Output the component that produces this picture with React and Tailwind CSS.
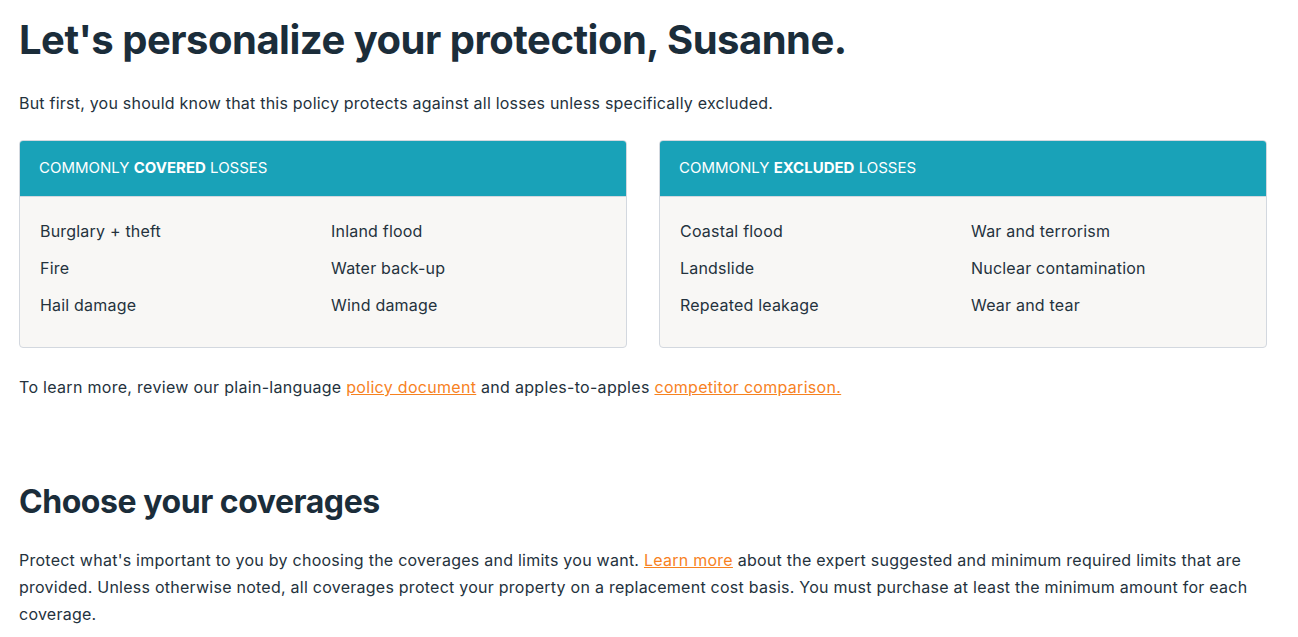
import React from "react";

const covered = [
  ["Burglary + theft", "Inland flood"],
  ["Fire", "Water back-up"],
  ["Hail damage", "Wind damage"],
];
const excluded = [
  ["Coastal flood", "War and terrorism"],
  ["Landslide", "Nuclear contamination"],
  ["Repeated leakage", "Wear and tear"],
];

function Card({ word, rows }) {
  return (
    <div className="rounded-[4px] border border-[#d3d8df] overflow-hidden bg-[#f8f7f5]">
      <div className="h-[56px] bg-[#19a2b8] flex items-center px-[19px] text-white text-[15px] tracking-[0px] border-b border-[#d3d8df]">
        <span>
          COMMONLY <span className="font-bold">{word}</span> LOSSES
        </span>
      </div>
      <div className="px-[20px] pt-[22px] pb-[30px] grid grid-cols-2 gap-x-[16px] gap-y-[13px] text-[16px] leading-[24px] tracking-[0.2px] text-[#24323d]">
        {rows.flat().map((t) => (
          <div key={t}>{t}</div>
        ))}
      </div>
    </div>
  );
}

export default function App() {
  return (
    <div
      className="bg-white min-h-[637px] text-[#24323d]"
      style={{ fontFamily: "Inter, 'Open Sans', Arial, sans-serif" }}
    >
      <div className="w-[1248px] ml-[19px]">
        <h1 className="text-[40px] leading-[48px] font-bold text-[#1b2d3a] pt-[16px] tracking-[-0.5px]">
          Let's personalize your protection, Susanne.
        </h1>
        <p className="mt-[27px] text-[16px] leading-[24px] tracking-[0.22px]">
          But first, you should know that this policy protects against all losses unless specifically excluded.
        </p>
        <div className="mt-[25px] grid grid-cols-2 gap-[32px]">
          <Card word="COVERED" rows={covered} />
          <Card word="EXCLUDED" rows={excluded} />
        </div>
        <p className="mt-[27px] text-[16px] leading-[24px] tracking-[0.3px]">
          To learn more, review our plain-language{" "}
          <a href="#" className="text-[#f7821f] underline">policy document</a> and apples-to-apples{" "}
          <a href="#" className="text-[#f7821f] underline">competitor comparison.</a>
        </p>
        <h2 className="mt-[83px] text-[32px] leading-[40px] font-bold text-[#1b2d3a] tracking-[-0.45px]">
          Choose your coverages
        </h2>
        <p className="mt-[25px] text-[16px] leading-[27px] tracking-[0.25px]">
          Protect what's important to you by choosing the coverages and limits you want.{" "}
          <a href="#" className="text-[#f7821f] underline">Learn more</a> about the expert suggested and minimum
          required limits that are provided. Unless otherwise noted, all coverages protect your property on a
          replacement cost basis. You must purchase at least the minimum amount for each coverage.
        </p>
      </div>
    </div>
  );
}
